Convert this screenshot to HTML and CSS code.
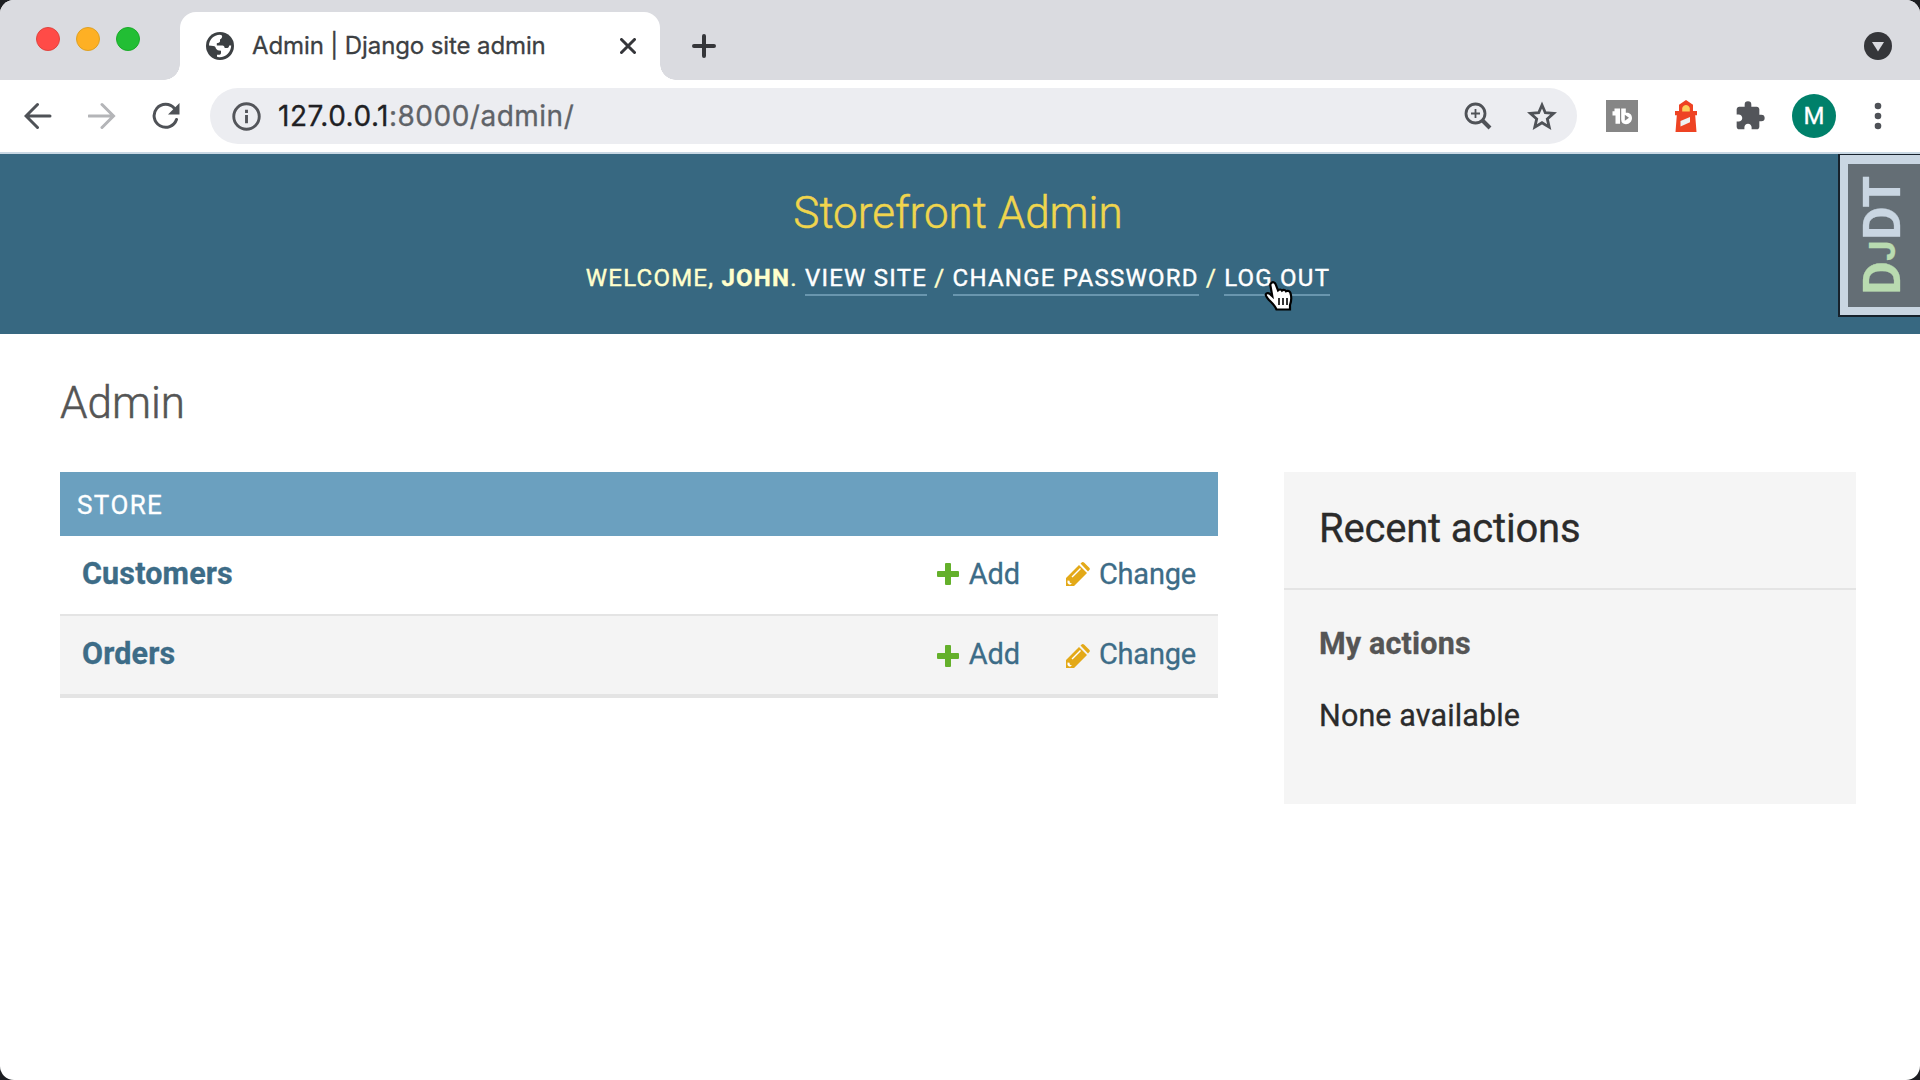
FILE: index.html
```html
<!DOCTYPE html>
<html lang="en">
<head>
<meta charset="utf-8">
<title>Admin | Django site admin</title>
<link rel="stylesheet" href="styles.css">
</head>
<body>
<div class="window">
  <div class="tabstrip">
    <div class="lights"><i class="light red"></i><i class="light amber"></i><i class="light green"></i></div>
    <div class="tab">
      <svg class="globe" viewBox="0 0 28 28"><circle cx="14" cy="14" r="14" fill="#3c4043"/><path d="M3 13.500C3 8 7.500 3 14 2.800l2 .6c.5 1.800-.3 3.100-2 4v2.100c-.6 1.200-1.600 1.600-3.200 1.700v2.300h5.700c1.300.3 2 1.200 2.200 2.500h2.600c1.200-.1 1.600-1.300 1.900-2.500h2C25 20 20 25.500 13 25.200l-2-.5v-1.900h2.500c1-.3 1.500-1 1.500-2v-2.100c-2.500 0-4.500-.8-5.200-2.500-.3-1.500-1-2.200-2.500-2.200z" fill="#fff"/></svg>
      <span class="tab-title">Admin | Django site admin</span>
      <svg class="close" viewBox="0 0 16 16"><path d="M1.500 1.500l13 13M14.500 1.500l-13 13"/></svg>
    </div>
    <svg class="newtab" viewBox="0 0 24 24"><path d="M12 2v20M2 12h20"/></svg>
    <svg class="tabmenu" viewBox="0 0 28 28"><circle cx="14" cy="14" r="14" fill="#35363a"/><path d="M8 10h12l-6 9.500z" fill="#dadbe0"/></svg>
  </div>
  <div class="toolbar">
    <svg class="nav back" viewBox="0 0 28 28"><path d="M26 14H3M13.500 2.500L2 14l11.500 11.500"/></svg>
    <svg class="nav forward" viewBox="0 0 28 28"><path d="M1 14h24M14 2.500L25.500 14 14 25.500"/></svg>
    <svg class="nav reload" viewBox="0 0 28 28"><path d="M24.500 17.500A11.500 11.500 0 1 1 22.500 6.500"/><path class="solid" d="M27.500 1v11.500H16z"/></svg>
    <div class="omnibox">
      <svg class="info" viewBox="0 0 28 28"><circle cx="14" cy="14" r="12.300"/><path d="M14 12.500v8M14 7.500v3"/></svg>
      <span class="url"><b>127.0.0.1</b>:8000/admin/</span>
      <svg class="zoom" viewBox="0 0 28 28"><circle cx="11.500" cy="11.500" r="9.500"/><path d="M18.500 18.500l7.500 7.500" class="thick"/><path d="M11.500 7v9M7 11.500h9" class="thin"/></svg>
      <svg class="star" viewBox="0 0 30 30"><path d="M15 4l3.300 7.700 8.300.7-6.300 5.500 1.900 8.200-7.200-4.400-7.200 4.400 1.900-8.200-6.300-5.500 8.300-.7z"/></svg>
    </div>
    <svg class="ext tb" viewBox="0 0 32 32"><path d="M0 0h32v32H0z" fill="#868686"/><path d="M8.500 8.500H14v15.200H9.500V15.500H6.500v-4.300h2zM15.200 8.500h4.600v4.300c3.600-.8 6.200 1.700 6.200 5.200 0 3.300-2.400 6.200-6 6.200-3 0-4.800-1.800-4.800-4.700z" fill="#fff"/><path d="M18.800 14.800l4.200 3-4.200 3z" fill="#868686"/></svg>
    <svg class="ext lighthouse" viewBox="0 0 32 32"><path d="M16 0l7 4.800V11h4v4.200h-1.800L26.500 32h-21l1.300-16.800H5V11h4V4.800z" fill="#ee4323"/><path d="M12.200 11.500V8c1.500-4 6.100-4 7.600 0v3.500z" fill="#fccf5b"/><path d="M10.500 21l9.500-4v5.300L10.500 26.500z" fill="#eef1f2"/></svg>
    <svg class="ext puzzle" viewBox="0 0 24 24"><path d="M20.500 11H19V7c0-1.100-.9-2-2-2h-4V3.500a2.500 2.500 0 0 0-5 0V5H4c-1.100 0-2 .9-2 2v3.800h1.500c1.500 0 2.700 1.200 2.700 2.700S5 16.200 3.500 16.200H2V20c0 1.100.9 2 2 2h3.800v-1.500c0-1.500 1.200-2.700 2.700-2.700s2.700 1.200 2.700 2.700V22H17c1.100 0 2-.9 2-2v-4h1.500a2.500 2.500 0 0 0 0-5z" fill="#53555a"/></svg>
    <span class="avatar">M</span>
    <svg class="dots" viewBox="0 0 8 28"><circle cx="4" cy="4" r="3.300"/><circle cx="4" cy="14" r="3.300"/><circle cx="4" cy="24" r="3.300"/></svg>
  </div>
  <header class="header">
    <h1 class="brand">Storefront Admin</h1>
    <div class="usertools">Welcome, <strong>John</strong>. <a>View site</a> / <a>Change password</a> / <a>Log out</a></div>
    <div class="djdt"><div class="djdt-inner"><span class="djdt-text"><span class="dj">D<small>J</small></span>DT</span></div></div>
    <svg class="cursor" viewBox="0 0 30 32"><path d="M7.500 2.800c1.800-1.300 3.600-.2 4.200 1.600l2.300 6c1.500-1.400 3.300-1 4 .2 1.500-1.200 3.300-.7 4 .6 1.800-.9 3.800 0 4.400 1.600 1.500 4.500 1.200 7.700-.4 12.200v4.500H12.500C11 25.500 8 23 5 20c-1.700-2-3.500-4.200-3.300-5.500.5-1.800 2.800-1.800 4.200-.5l2.400 2.200L6.500 6c-.4-1.400-.2-2.400 1-3.200z"/><path class="knuckle" d="M15 18v7M19 18v7M23 18v7"/></svg>
  </header>
  <main class="content">
    <h2 class="title">Admin</h2>
    <div class="columns">
      <section class="module">
        <h3 class="caption">Store</h3>
        <div class="row"><a class="model">Customers</a><a class="add"><svg viewBox="0 0 24 24"><path d="M10 1h4q1 0 1 1v7h7q1 0 1 1v4q0 1-1 1h-7v7q0 1-1 1h-4q-1 0-1-1v-7H2q-1 0-1-1v-4q0-1 1-1h7V2q0-1 1-1z"/></svg>Add</a><a class="change"><svg viewBox="0 0 24 24"><path d="M0 16L13 3l8 8L8 24H0zM14.500 1.500L16 .3q1-.6 2 .2l5.300 5.300q1 1 .2 2L22 9.500z"/><path class="shine" d="M5.500 14.500L14 6l1 1-8.500 8.500zM1.500 18.500l2 .3.400 2 2 .4-1.400 1.400H3L1.500 21z"/></svg>Change</a></div>
        <div class="row odd"><a class="model">Orders</a><a class="add"><svg viewBox="0 0 24 24"><path d="M10 1h4q1 0 1 1v7h7q1 0 1 1v4q0 1-1 1h-7v7q0 1-1 1h-4q-1 0-1-1v-7H2q-1 0-1-1v-4q0-1 1-1h7V2q0-1 1-1z"/></svg>Add</a><a class="change"><svg viewBox="0 0 24 24"><path d="M0 16L13 3l8 8L8 24H0zM14.500 1.500L16 .3q1-.6 2 .2l5.300 5.300q1 1 .2 2L22 9.500z"/><path class="shine" d="M5.500 14.500L14 6l1 1-8.500 8.500zM1.500 18.500l2 .3.400 2 2 .4-1.400 1.400H3L1.500 21z"/></svg>Change</a></div>
      </section>
      <aside class="sidebar">
        <h2 class="recent">Recent actions</h2>
        <h3 class="mine">My actions</h3>
        <p class="none">None available</p>
      </aside>
    </div>
  </main>
</div>
</body>
</html>
```
FILE: styles.css
```css
* { box-sizing: border-box; margin: 0; padding: 0; }
body { background: #1d1e22; font-family: Roboto, "Liberation Sans", sans-serif; -webkit-text-stroke: 0.300px currentColor; }
svg { display: block; flex: none; }
.window { width: 1920px; height: 1080px; overflow: hidden; background: #fff; border-radius: 14px; }

.tabstrip { display: flex; height: 80px; background: #dadbe0; }
.lights { display: flex; gap: 16px; padding: 27px 0 0 36px; width: 180px; }
.light { width: 24px; height: 24px; border-radius: 50%; }
.red { background: #ff4b47; border: 1px solid #e0443e; }
.amber { background: #feb024; border: 1px solid #dea123; }
.green { background: #22be34; border: 1px solid #1aab29; }
.tab { position: relative; display: flex; align-items: center; width: 480px; height: 68px; margin-top: 12px; padding: 0 24px 0 26px; background: #fff; border-radius: 16px 16px 0 0; }
.tab::before, .tab::after { content: ""; position: absolute; bottom: 0; width: 16px; height: 16px; }
.tab::before { left: -16px; background: radial-gradient(circle at 0 0, transparent 15.500px, #fff 16px); }
.tab::after { right: -16px; background: radial-gradient(circle at 100% 0, transparent 15.500px, #fff 16px); }
.globe { width: 28px; height: 28px; margin-right: 18px; }
.tab-title { flex: 1; padding-bottom: 2px; font: 24px Inter, sans-serif; letter-spacing: -0.110px; color: #3c4043; white-space: nowrap; }
.close { width: 16px; height: 16px; fill: none; stroke: #35363a; stroke-width: 3; stroke-linecap: round; }
.newtab { width: 24px; height: 24px; margin: 34px 0 0 32px; fill: none; stroke: #35363a; stroke-width: 4; stroke-linecap: round; }
.tabmenu { width: 28px; height: 28px; margin: 32px 28px 0 auto; }

.toolbar { display: flex; align-items: center; height: 74px; padding: 0 38px 0 24px; background: #fff; border-bottom: 2px solid #c9d8e4; }
.nav { width: 28px; height: 28px; fill: none; stroke: #4f5257; stroke-width: 3; stroke-linecap: round; }
.nav .solid { fill: #4f5257; stroke: none; }
.forward { margin-left: 36px; stroke: #b4b5b8; }
.reload { margin-left: 36px; }
.omnibox { display: flex; align-items: center; width: 1367px; height: 56px; margin-left: 30px; padding: 0 20px 0 22px; background: #ecedf1; border-radius: 28px; }
.info { width: 29px; height: 29px; fill: none; stroke: #53555a; stroke-width: 2.800; }
.url { flex: 1; margin-left: 17px; font: 28px Inter, sans-serif; letter-spacing: 0.500px; color: #5f6368; white-space: nowrap; }
.url b { font-weight: 400; color: #202124; }
.zoom { width: 28px; height: 28px; fill: none; stroke: #4f5257; stroke-width: 2.800; }
.zoom .thick { stroke-width: 4; }
.zoom .thin { stroke-width: 1.800; }
.star { width: 30px; height: 30px; margin-left: 35px; fill: none; stroke: #4f5257; stroke-width: 2.800; }
.ext { width: 32px; height: 32px; }
.tb { margin-left: 29px; }
.lighthouse { margin-left: 32px; }
.puzzle { margin-left: 32px; }
.avatar { width: 44px; height: 44px; margin-left: 26px; border-radius: 50%; background: #00806a; color: #fff; font-size: 24px; line-height: 44px; text-align: center; }
.dots { width: 8px; height: 28px; margin-left: auto; fill: #4f5257; }

.header { position: relative; height: 180px; padding: 33px 4px 0 0; background: #376881; text-align: center; }
.brand { font-weight: 300; font-size: 44px; line-height: 52px; color: #f0d54d; -webkit-text-stroke-width: 0.500px; }
.usertools { margin-top: 25px; font-size: 24px; line-height: 28px; letter-spacing: 1.230px; text-transform: uppercase; color: #ffffcc; -webkit-text-stroke-width: 0.400px; }
.usertools a { padding-bottom: 2px; color: #fff; border-bottom: 2px solid #6996ae; }
.djdt { position: absolute; top: 0; right: 0; width: 82px; height: 163px; padding: 9px 0 8px 8px; background: #c9d6e2; border: 2px solid #17222c; border-width: 1px 0 2px 2px; }
.djdt-inner { display: flex; align-items: center; justify-content: center; height: 100%; padding: 0 3px 2px 0; background: #646e75; }
.djdt-text { writing-mode: vertical-rl; transform: rotate(180deg); font: bold 51px Roboto, sans-serif; line-height: 60px; letter-spacing: 0.800px; color: #c9d6e2; }
.dj { color: #b9dbb0; }
.dj small { font-size: 36px; }
.cursor { position: absolute; left: 1264px; top: 126px; width: 30px; height: 32px; fill: #fff; stroke: #000; stroke-width: 2.200; }
.cursor .knuckle { stroke-width: 1.600; }

.content { padding: 39px 64px 0 60px; }
.title { font-weight: 300; font-size: 44px; line-height: 60px; color: #555; -webkit-text-stroke-width: 0.500px; }
.columns { display: flex; align-items: flex-start; justify-content: space-between; margin-top: 39px; }
.module { width: 1158px; border-bottom: 4px solid #e4e4e4; }
.caption { height: 64px; padding-left: 17px; background: #6ba0bf; color: #fff; font-weight: 400; font-size: 26px; line-height: 66px; letter-spacing: 1.400px; text-transform: uppercase; }
.row { display: flex; height: 80px; padding: 0 22px; border-bottom: 2px solid #e4e4e4; line-height: 76px; color: #3d6c87; }
.row.odd { height: 78px; border-bottom: 0; background: #f4f4f4; }
.model { flex: 1; font-weight: 700; font-size: 30.500px; letter-spacing: 0.150px; }
.add, .change { display: flex; font-size: 29px; letter-spacing: -0.200px; }
.add svg, .change svg { width: 24px; height: 24px; margin: 26px 9px 0 0; }
.odd svg { margin-top: 28px; }
.add svg { fill: #64b02b; }
.change { margin-left: 46px; }
.change svg { fill: #e3a918; }
.change .shine { fill: #fff; }

.sidebar { width: 572px; height: 332px; background: #f5f5f5; }
.recent { height: 118px; padding-left: 35px; border-bottom: 2px solid #e4e4e4; font-weight: 400; font-size: 40px; line-height: 114px; letter-spacing: -0.200px; color: #2b2b2b; }
.mine { padding: 36px 0 0 35px; font-size: 30.500px; line-height: 36px; letter-spacing: 0.150px; color: #555; }
.none { padding: 36px 0 0 35px; font-size: 30.500px; line-height: 36px; letter-spacing: 0.120px; color: #2b2b2b; }
```
